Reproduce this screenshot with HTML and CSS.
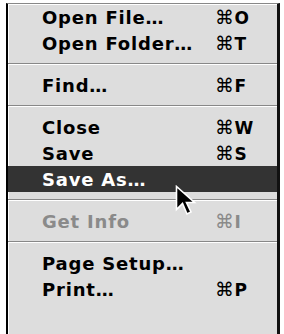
FILE: index.html
```html
<!DOCTYPE html>
<html>
<head>
<meta charset="utf-8">
<link rel="stylesheet" href="styles.css">
</head>
<body>
<div class="menu">
  <div class="item"><span class="label">Open File…</span><span class="key"><span class="cmd">⌘</span>O</span></div>
  <div class="item"><span class="label">Open Folder…</span><span class="key"><span class="cmd">⌘</span>T</span></div>
  <div class="sep"></div>
  <div class="item"><span class="label">Find…</span><span class="key"><span class="cmd">⌘</span>F</span></div>
  <div class="sep"></div>
  <div class="item"><span class="label">Close</span><span class="key"><span class="cmd">⌘</span>W</span></div>
  <div class="item"><span class="label">Save</span><span class="key"><span class="cmd">⌘</span>S</span></div>
  <div class="item selected"><span class="label">Save As…</span><span class="key"></span></div>
  <div class="sep"></div>
  <div class="item disabled"><span class="label">Get Info</span><span class="key"><span class="cmd">⌘</span>I</span></div>
  <div class="sep"></div>
  <div class="item"><span class="label">Page Setup…</span><span class="key"></span></div>
  <div class="item"><span class="label">Print…</span><span class="key"><span class="cmd">⌘</span>P</span></div>
  <svg class="cursor" width="26" height="34" viewBox="0 0 26 34">
    <path d="M1.5 1.5 L1.5 24.5 L7.5 18.5 L12 29 L16 27 L11.5 17.5 L19.5 17.5 Z" fill="#000" stroke="#fff" stroke-width="1.6" stroke-linejoin="miter"/>
  </svg>
</div>
</body>
</html>
```
FILE: styles.css
```css
html, body {
  margin: 0;
  padding: 0;
  background: #fff;
}
body {
  padding: 3px 4px 0 6px;
  height: 334px;
  box-sizing: border-box;
  overflow: hidden;
}
.menu {
  position: relative;
  background: #dddddd;
  border-top: 1px solid #888;
  border-left: 2px solid #000;
  border-right: 3px solid #111;
  box-shadow: inset 1px 1px 0 #fff;
  height: 340px;
  font-family: "DejaVu Sans", sans-serif;
  font-weight: bold;
  font-size: 18px;
  letter-spacing: 0.8px;
  color: #000;
}
.item {
  display: flex;
  align-items: center;
  height: 26px;
  padding-left: 34px;
}
.label {
  flex: 1;
}
.key {
  width: 62px;
  font-size: 17px;
  letter-spacing: 1px;
}
.cmd {
  font-weight: normal;
  font-size: 19px;
  letter-spacing: 0.5px;
}
.selected {
  background: #333;
  color: #fff;
}
.disabled {
  color: #8a8a8a;
}
.sep {
  height: 16px;
  display: flex;
  flex-direction: column;
  justify-content: center;
}
.sep::before {
  content: "";
  display: block;
  height: 1px;
  background: #888;
  border-bottom: 1px solid #fff;
}
.cursor {
  position: absolute;
  left: 167px;
  top: 181px;
}
```
